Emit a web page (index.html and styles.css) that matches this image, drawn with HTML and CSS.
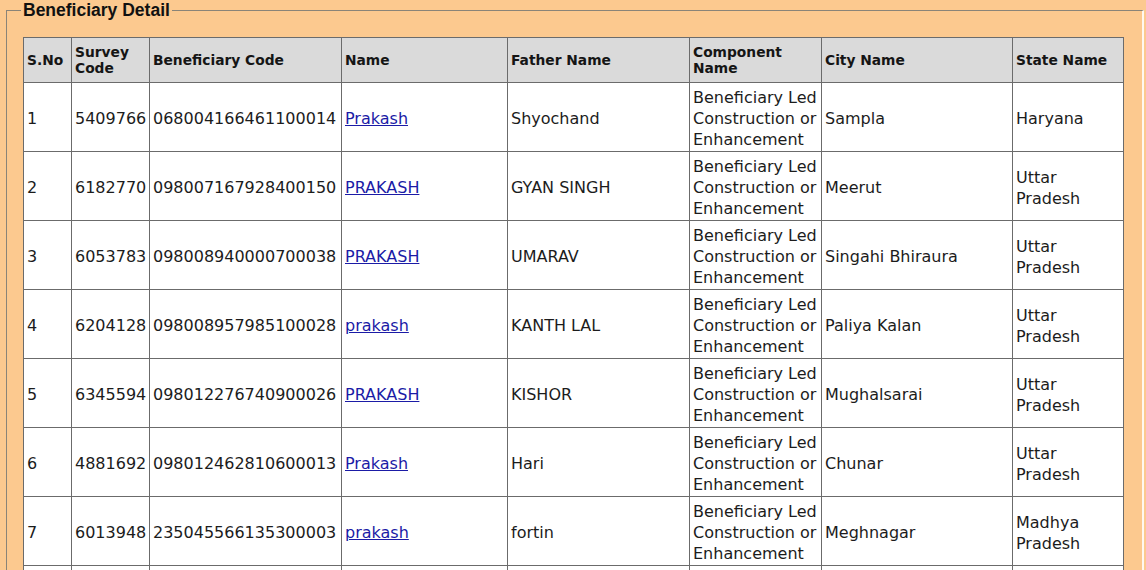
FILE: index.html
```html
<!DOCTYPE html>
<html>
<head>
<meta charset="utf-8">
<link rel="stylesheet" href="styles.css">
</head>
<body>
<fieldset class="panel">
<legend class="panel-title">Beneficiary Detail</legend>
<table class="grid">
<colgroup>
<col class="c-sno"><col class="c-survey"><col class="c-code"><col class="c-name"><col class="c-father"><col class="c-comp"><col class="c-city"><col class="c-state">
</colgroup>
<thead>
<tr><th>S.No</th><th>Survey Code</th><th>Beneficiary Code</th><th>Name</th><th>Father Name</th><th>Component Name</th><th>City Name</th><th>State Name</th></tr>
</thead>
<tbody>
<tr><td>1</td><td>5409766</td><td>068004166461100014</td><td><a href="#">Prakash</a></td><td>Shyochand</td><td>Beneficiary Led Construction or Enhancement</td><td>Sampla</td><td>Haryana</td></tr>
<tr><td>2</td><td>6182770</td><td>098007167928400150</td><td><a href="#">PRAKASH</a></td><td>GYAN SINGH</td><td>Beneficiary Led Construction or Enhancement</td><td>Meerut</td><td>Uttar Pradesh</td></tr>
<tr><td>3</td><td>6053783</td><td>098008940000700038</td><td><a href="#">PRAKASH</a></td><td>UMARAV</td><td>Beneficiary Led Construction or Enhancement</td><td>Singahi Bhiraura</td><td>Uttar Pradesh</td></tr>
<tr><td>4</td><td>6204128</td><td>098008957985100028</td><td><a href="#">prakash</a></td><td>KANTH LAL</td><td>Beneficiary Led Construction or Enhancement</td><td>Paliya Kalan</td><td>Uttar Pradesh</td></tr>
<tr><td>5</td><td>6345594</td><td>098012276740900026</td><td><a href="#">PRAKASH</a></td><td>KISHOR</td><td>Beneficiary Led Construction or Enhancement</td><td>Mughalsarai</td><td>Uttar Pradesh</td></tr>
<tr><td>6</td><td>4881692</td><td>098012462810600013</td><td><a href="#">Prakash</a></td><td>Hari</td><td>Beneficiary Led Construction or Enhancement</td><td>Chunar</td><td>Uttar Pradesh</td></tr>
<tr><td>7</td><td>6013948</td><td>235045566135300003</td><td><a href="#">prakash</a></td><td>fortin</td><td>Beneficiary Led Construction or Enhancement</td><td>Meghnagar</td><td>Madhya Pradesh</td></tr>
<tr class="row-empty"><td></td><td></td><td></td><td></td><td></td><td></td><td></td><td></td></tr>
</tbody>
</table>
</fieldset>
</body>
</html>
```
FILE: styles.css
```css
html, body {
  margin: 0;
  padding: 0;
  background: #fcc98f;
}
body {
  font-family: "DejaVu Sans", Verdana, sans-serif;
  color: #1c1c1c;
  overflow: hidden;
}
.panel {
  margin: 0 2px 0 6px;
  padding: 17px 17px 20px 16px;
  border-color: #8a8478 #fff8f0 #fff8f0 #8a8478;
  border-width: 1px 2px 2px 1px;
  border-style: solid;
}
.panel-title {
  font-family: "Liberation Sans", Arial, sans-serif;
  font-weight: bold;
  font-size: 17.5px;
  line-height: 20px;
  color: #111;
  padding: 0 2px;
  margin-left: -2px;
}
.grid {
  width: 1100px;
  table-layout: fixed;
  border-collapse: collapse;
  border: 1px solid #6b6b6b;
  background: #fff;
}
.c-sno { width: 48px; }
.c-survey { width: 78px; }
.c-code { width: 192px; }
.c-name { width: 166px; }
.c-father { width: 182px; }
.c-comp { width: 132px; }
.c-city { width: 191px; }
.c-state { width: 111px; }
.grid th, .grid td {
  border: 1px solid #6b6b6b;
  text-align: left;
  vertical-align: middle;
  overflow: hidden;
}
.grid th {
  background: #dadada;
  font-size: 13.8px;
  font-weight: bold;
  line-height: 16px;
  padding: 6px 2px 6px 3px;
  height: 32px;
  color: #151515;
}
.grid td {
  font-size: 16px;
  line-height: 21px;
  padding: 4px 2px 1px 3px;
  height: 63px;
}
.grid td a {
  color: #1b1ba6;
  text-decoration: underline;
}
```
